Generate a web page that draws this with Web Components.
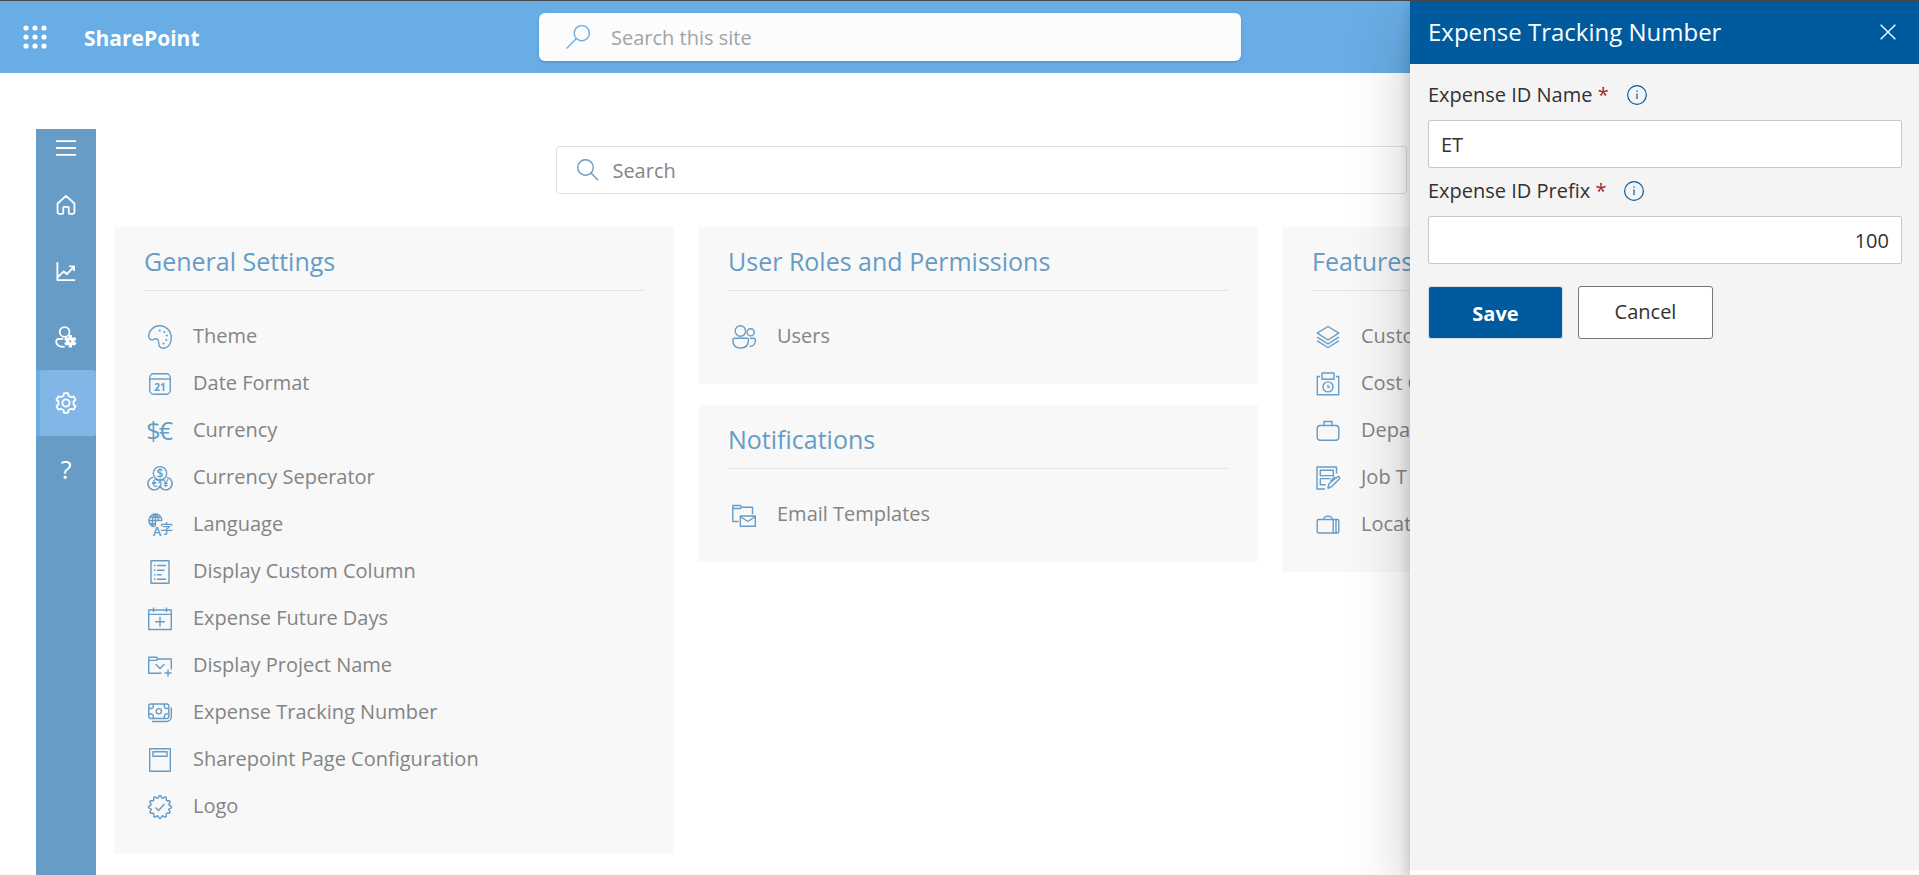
<!DOCTYPE html>
<html lang="en">
<head>
<meta charset="utf-8">
<title>Expense Settings</title>
<style>
  html, body { margin: 0; }
  body {
    font-family: "Open Sans", "Noto Sans", sans-serif;
    font-size: 20px;
    line-height: 28px;
    color: #848484;
    background: #fff;
    --theme: #005a9e;
    --theme-faded: #669cc5;
    --suite-faded: #68ade6;
    --card: #f8f8f8;
  }
</style>
</head>
<body>
<settings-page></settings-page>

<script>
const polar = (r, deg) => {
  const a = (deg - 90) * Math.PI / 180;
  return (12 + r * Math.cos(a)).toFixed(2) + ' ' + (12 + r * Math.sin(a)).toFixed(2);
};
const gearPath = (teeth, outer, inner) => {
  const pts = [];
  for (let k = 0; k < teeth; k++) {
    const c = k * 360 / teeth;
    pts.push(polar(inner, c - 19), polar(outer, c - 11), polar(outer, c + 11), polar(inner, c + 19));
  }
  return 'M' + pts.join('L') + 'Z';
};
const sealPath = () => {
  const pts = [];
  for (let k = 0; k < 12; k++) pts.push(polar(11.4, k * 30 - 3), polar(11.4, k * 30 + 3), polar(9.2, k * 30 + 13), polar(9.2, k * 30 + 17));
  return 'M' + pts.join('L') + 'Z';
};

const ICONS = {
  waffle: '<g fill="currentColor" stroke="none">' + [3, 12, 21].flatMap(y => [3, 12, 21].map(x => `<circle cx="${x}" cy="${y}" r="2.6"/>`)).join('') + '</g>',
  searchLeft: '<circle cx="15.8" cy="8.2" r="7.6"/><path d="M10.4 13.6 0.6 23.4"/>',
  searchRight: '<circle cx="9.5" cy="9.5" r="7.8"/><path d="M15 15l7.2 7.2"/>',
  menu: '<path d="M1 4.500h22M1 12h22M1 19.500h22"/>',
  home: '<path d="M2.8 10.4 12 2l9.2 8.4V20a1.6 1.6 0 0 1-1.6 1.6h-3.4a1.2 1.2 0 0 1-1.2-1.2V15a1 1 0 0 0-1-1h-4a1 1 0 0 0-1 1v5.400a1.200 1.200 0 0 1-1.200 1.200H4.400A1.600 1.600 0 0 1 2.800 20Z"/>',
  chart: '<path d="M2.600 2.500v19.400h19.400M2.800 19 9.500 12.500l3.500 3 8-8.500M15.500 7h5.300v5"/>',
  userGear: '<circle cx="10.500" cy="6.500" r="5.300"/><path d="M9 14H4.500A3.200 3.200 0 0 0 1.300 17.200C1.300 21 5 22.800 10.500 22.800"/><g transform="translate(9.500 9.500) scale(.6)"><path fill="currentColor" stroke-width="2" fill-rule="evenodd" d="' + gearPath(6, 10.500, 7) + 'M15 12a3 3 0 1 0-6 0 3 3 0 0 0 6 0Z"/></g>',
  gear: `<path d="${gearPath(6, 11, 8.400)}"/><circle cx="12" cy="12" r="3.900"/>`,
  palette: '<path d="M11.500.7C5.500.7.7 5.800.7 11c0 3 2.400 4.700 5 3.400 2.300-1.200 4.500-.8 4.800 2 .2 1.600.1 3 .7 4.300.8 1.700 2.300 2.600 4.300 2.600 4.300 0 7.800-4.500 7.800-10C23.300 6 18.300.7 11.500.7Z"/><g fill="currentColor" stroke="none"><circle cx="11.700" cy="5.500" r="1.100"/><circle cx="16.300" cy="7" r="1.100"/><circle cx="18.800" cy="10.500" r="1.100"/><circle cx="18.300" cy="15" r="1.100"/><circle cx="15.500" cy="18.500" r="1.100"/></g>',
  date: '<rect x="1.700" y="1.700" width="20.600" height="20.600" rx="4"/><path d="M1.700 7h20.600"/><text x="12" y="18.500" font-size="10" font-weight="700">21</text>',
  currency: '<text x="5.500" y="20.500" font-size="25" font-weight="400">$</text><text x="18" y="20.500" font-size="25" font-weight="400">€</text>',
  coins: '<path d="M5.200 11.400A6.300 6.300 0 1 0 12 20 6.300 6.300 0 1 0 18.800 11.400"/><path d="M13.300 17.300A6.300 6.300 0 0 1 12 20M8 13.600a6.300 6.300 0 0 1 5.300 3.700M16 13.600a6.300 6.300 0 0 0-5.300 3.700"/><circle cx="12" cy="7.300" r="6.700"/><text x="12" y="11.500" font-size="12" font-weight="600">$</text><text x="6.500" y="21" font-size="10" font-weight="600">€</text><text x="17.500" y="21" font-size="10" font-weight="600">¥</text>',
  language: '<path d="M13.900 7.500A6.500 6.500 0 1 0 5.500 13.700M14 7.500H.8M7.400 1v12.500M1.700 4.200h11.600M1.700 10.800h6M7.400 1C3.500 3 3.500 12 6.500 13.800M7.400 1c2.400 1.500 3 4 3.100 7"/><text x="9" y="22.800" font-size="13" font-weight="600">A</text><text class="cjk" x="18.500" y="20" font-size="13" font-weight="500">字</text>',
  list: '<rect x="3" y=".7" width="18" height="22.600"/><path d="M6 5.500h1.500M9 5.500h9M6 10.200h1.500M9 10.200h7.500M6 14.800h1.500M9 14.800h4.500M6 19.300h1.500M9 19.300h9"/>',
  calendarAdd: '<path d="M.7 3h22.600v19.500H.7ZM.7 7.400h22.600M5.500.5v4.500M18.500.5v4.500M12 9.800v10M7 14.800h10"/>',
  folderAdd: '<path d="M13.500 19.200H.7V3.200h7.800l1.500 1.800h13.300v10.500M.7 6.400h7.500l1.800-1.400M7.500 10l4.500 4.500 4.500-4.500M20 15.500v7M16.500 19h7"/>',
  money: '<rect x=".8" y="3" width="20" height="14.500" rx="2"/><circle cx="10.800" cy="10.200" r="2.600"/><path d="M5.300 3v2.200A2.200 2.200 0 0 1 3.100 7.500H.8M16.300 3v2.200a2.200 2.200 0 0 0 2.200 2.300h2.300M5.300 17.500v-2.200A2.200 2.200 0 0 0 3.100 13H.8M16.300 17.500v-2.200a2.200 2.200 0 0 1 2.200-2.300h2.300M4 20.500h14.500a4.800 4.800 0 0 0 4.800-4.800V6.500"/>',
  page: '<rect x="1.700" y=".7" width="20.600" height="22.600"/><rect x="4.900" y="3.700" width="14.200" height="4.600"/>',
  seal: `<path d="${sealPath()}"/><path d="m7.500 12.500 3 3 6-6.500"/>`,
  people: '<circle cx="8.400" cy="6" r="5.200"/><circle cx="18.700" cy="7.300" r="3.600"/><path d="M2.500 13.300h12.300a1.700 1.700 0 0 1 1.700 1.700c0 5-3 8-7.900 8s-7.800-3-7.800-8a1.700 1.700 0 0 1 1.700-1.700ZM17.800 13.300h4a1.600 1.600 0 0 1 1.600 1.600c0 4-2.500 6.500-6 6.500"/>',
  folderMail: '<path d="M6.500 18.500H.8V2.500h7.500l1.500 1.700H20.500v7M.8 5.500h7.500l1.500-1.300M8.300 13h15v10.300h-15ZM8.300 13.500l7.500 5 7.500-5"/>',
  layers: '<path d="M12 1.500 22.800 8.200 12 15 1.200 8.200ZM1.200 12.200 12 19l10.800-6.800M1.200 15.800 12 22.500l10.800-6.700"/>',
  safe: '<path d="M4 4.500H1.300v18.300h21.400V4.500H20"/><rect x="6" y="1" width="12" height="6.300"/><circle cx="12" cy="14.900" r="5"/><path d="M12 12.800v2.300h2.200"/>',
  briefcase: '<rect x="1.200" y="6.500" width="21.600" height="14.800" rx="3"/><path d="M8 6.500v-4h8v4"/>',
  formEdit: '<path d="M20.500 7.500V1H1v22h8"/><path d="M4.300 4.300h13v5.300h-13ZM4.300 12.600h10M4.300 12.600v6.200h5.500M19 10.500l-4.500 4.500M12 21.300l1.200-3.800 8-6.500a1.300 1.300 0 0 1 2 2L16 20.300l-4 2Z"/>',
  suitcase: '<rect x="1.200" y="6.500" width="21.600" height="13.500" rx="1.500"/><path d="M8 6.500C8 3.500 9.500 3.300 12 3.300s4 .2 4 3.200M17.200 6.500V20M20 6.500V20"/>',
  info: '<circle cx="12" cy="12" r="11.200"/><path d="M12 10.300v6.500"/><circle cx="12" cy="7.300" r=".9" fill="currentColor" stroke="none"/>',
  close: '<path d="M1 1l22 22M23 1 1 23"/>',
  help: '<text x="12" y="23" font-size="28" font-weight="400">?</text>'
};

class UiIcon extends HTMLElement {
  constructor() { super(); this.attachShadow({ mode: 'open' }); }
  connectedCallback() {
    this.shadowRoot.innerHTML = `
      <style>
        :host { display: block; flex: none; width: var(--icon-size, 24px); height: var(--icon-size, 24px); }
        svg { display: block; width: 100%; height: 100%; overflow: visible; fill: none; stroke: currentColor;
              stroke-width: var(--icon-stroke, 1.4); stroke-linejoin: round; }
        text { fill: currentColor; stroke: none; text-anchor: middle; font-family: "Open Sans", sans-serif; }
        .cjk { font-family: "Noto Sans CJK SC", sans-serif; }
      </style>
      <svg viewBox="0 0 24 24" aria-hidden="true">${ICONS[this.getAttribute('name')]}</svg>`;
  }
}
customElements.define('ui-icon', UiIcon);

const define = (tag, html) => {
  const template = document.createElement('template');
  template.innerHTML = html;
  customElements.define(tag, class extends HTMLElement {
    constructor() {
      super();
      this.attachShadow({ mode: 'open' }).append(template.content.cloneNode(true));
    }
  });
};

define('suite-header', `
  <style>
    :host { display: grid; grid-template-columns: 1fr minmax(200px, 702px) 1fr; align-items: center;
            height: 72px; margin-right: 139px; background: var(--suite-faded);
            box-shadow: 139px 0 var(--suite-faded); }
    .brand { display: flex; align-items: center; gap: 37px; padding-left: 23px; color: #fff; }
    button { padding: 0; border: 0; background: none; color: inherit; --icon-size: 24px; }
    a { padding-top: 2px; color: inherit; text-decoration: none; font-size: 21px; font-weight: 700; line-height: 30px; }
    .search { display: flex; align-items: center; gap: 21px; height: 48px; box-sizing: border-box; padding: 0 27px;
              background: #fcfcfc; border-radius: 6px; box-shadow: 0 1px 3px #4a8fc8; color: var(--suite-faded); }
    input { flex: 1; min-width: 0; padding: 2px 0 0; border: 0; outline: 0; background: none; font: inherit; color: #848484; }
    input::placeholder { color: #a3a3a3; opacity: 1; }
  </style>
  <div class="brand">
    <button aria-label="App launcher"><ui-icon name="waffle"></ui-icon></button>
    <a href="#">SharePoint</a>
  </div>
  <label class="search"><ui-icon name="searchLeft"></ui-icon><input type="search" placeholder="Search this site" aria-label="Search this site"></label>`);

define('nav-rail', `
  <style>
    :host { display: block; flex: none; width: 60px; background: var(--theme-faded); color: #fff; }
    nav { display: flex; flex-direction: column; }
  </style>
  <nav><slot></slot></nav>`);

define('nav-item', `
  <style>
    :host { display: block; height: 66px; --icon-size: 22px; --icon-stroke: 2; }
    :host([compact]) { height: 38px; margin-bottom: 5px; }
    a { display: flex; align-items: center; justify-content: center; height: 100%; color: inherit; text-decoration: none; }
    :host([selected]) a { background: #82b6e7; border-radius: 3px; box-shadow: inset 4px 0 var(--suite-faded); }
  </style>
  <a href="#"><slot></slot></a>`);

define('settings-card', `
  <style>
    :host { display: block; background: var(--card); padding: 15px 30px 25px; }
    h2 { margin: 0 0 21px; padding-bottom: 10px; border-bottom: 1px solid #e4e4e4; color: var(--theme-faded);
         font-size: 25px; font-weight: 400; line-height: 38px; }
    ul { margin: 0; padding: 0; list-style: none; }
  </style>
  <h2><slot name="title"></slot></h2>
  <ul role="list"><slot></slot></ul>`);

class SettingsLink extends HTMLElement {
  constructor() { super(); this.attachShadow({ mode: 'open' }); }
  connectedCallback() {
    this.setAttribute('role', 'listitem');
    this.shadowRoot.innerHTML = `
      <style>
        :host { display: block; }
        a { display: flex; align-items: center; gap: 21px; height: 47px; padding-left: 4px; color: inherit;
            text-decoration: none; white-space: nowrap; }
        ui-icon { color: var(--theme-faded); margin-top: 3px; }
      </style>
      <a href="#"><ui-icon name="${this.getAttribute('icon')}"></ui-icon><span><slot></slot></span></a>`;
  }
}
customElements.define('settings-link', SettingsLink);

define('settings-search', `
  <style>
    :host { display: block; width: 49%; margin: 0 auto; }
    label { display: flex; align-items: center; gap: 12px; height: 48px; box-sizing: border-box; padding: 0 19px;
            border: 1px solid #e0e0e0; border-radius: 3px; color: var(--theme-faded); }
    input { flex: 1; min-width: 0; padding: 2px 0 0; border: 0; outline: 0; background: none; font: inherit; }
    input::placeholder { color: #848484; opacity: 1; }
  </style>
  <label><ui-icon name="searchRight"></ui-icon><input type="search" placeholder="Search" aria-label="Search"></label>`);

class FormField extends HTMLElement {
  constructor() { super(); this.attachShadow({ mode: 'open' }); }
  connectedCallback() {
    const get = n => this.getAttribute(n) || '';
    this.shadowRoot.innerHTML = `
      <style>
        :host { display: block; }
        .head { display: flex; align-items: center; height: 46px; padding-bottom: 2px; }
        label { color: #323130; font-weight: 500; }
        i { font-style: normal; color: #a4262c; }
        button { margin-left: 18px; padding: 0; border: 0; background: none; color: var(--theme); --icon-size: 20px; }
        input { display: block; width: 100%; height: 48px; box-sizing: border-box; padding: 0 12px; border: 1px solid #c8c8c8;
                border-radius: 2px; background: #fff; color: #323130; font: inherit; }
        :host([numeric]) input { text-align: right; }
      </style>
      <div class="head">
        <label for="field">${get('label')} <i>*</i></label>
        <button type="button" aria-label="About ${get('label')}"><ui-icon name="info"></ui-icon></button>
      </div>
      <input id="field" type="text" required value="${get('value')}">`;
  }
}
customElements.define('form-field', FormField);

define('action-button', `
  <style>
    :host { display: block; }
    button { display: block; width: 135px; height: 53px; padding: 0 0 2px; border: 1px solid #767676; border-radius: 3px;
             background: #fff; color: #323130; font: inherit; font-weight: 500; }
    :host([primary]) button { padding: 2px 0 0; border-color: #d5dde4; background: var(--theme); color: #fff; font-weight: 700; }
  </style>
  <button type="button"><slot></slot></button>`);

define('side-panel', `
  <style>
    :host { position: fixed; top: 1px; right: 0; bottom: 0; width: 509px; max-width: 100%; display: flex; flex-direction: column;
            background: #fff; box-shadow: 0 26px 58px rgba(0,0,0,.22), 0 5px 14px rgba(0,0,0,.18); }
    header { display: flex; align-items: center; justify-content: space-between; height: 63px; box-sizing: border-box;
             padding: 0 23px 2px 18px; background: var(--theme); color: #fff; }
    h1 { margin: 0; font-size: 24px; font-weight: 400; line-height: 32px; }
    header button { padding: 0; border: 0; background: none; color: inherit; --icon-size: 16px; --icon-stroke: 2; }
    form { flex: 1; margin-bottom: 5px; padding: 8px 17px 0 18px; background: #f4f4f4; }
    .actions { display: flex; gap: 15px; margin-top: 22px; }
  </style>
  <header>
    <h1><slot name="title"></slot></h1>
    <button aria-label="Close"><ui-icon name="close"></ui-icon></button>
  </header>
  <form><slot></slot><div class="actions"><slot name="actions"></slot></div></form>`);

define('settings-page', `
  <style>
    :host { display: flex; flex-direction: column; min-height: 100vh; box-sizing: border-box; border-top: 1px solid #4a4a4a;
            overflow-x: hidden; }
    .shell { flex: 1; display: flex; padding: 56px 70px 0 36px; }
    main { flex: 1; min-width: 0; padding: 17px 0 16px 18px; }
    .cards { display: grid; grid-template-columns: repeat(3, minmax(0, 1fr)); gap: 24px; align-items: start;
             margin: 33px 7px 0 0; }
    .stack { display: grid; gap: 21px; }
  </style>
  <suite-header></suite-header>
  <div class="shell">
    <nav-rail>
      <nav-item compact><ui-icon name="menu"></ui-icon></nav-item>
      <nav-item><ui-icon name="home"></ui-icon></nav-item>
      <nav-item><ui-icon name="chart"></ui-icon></nav-item>
      <nav-item><ui-icon name="userGear"></ui-icon></nav-item>
      <nav-item selected><ui-icon name="gear"></ui-icon></nav-item>
      <nav-item><ui-icon name="help"></ui-icon></nav-item>
    </nav-rail>
    <main>
      <settings-search></settings-search>
      <div class="cards">
        <settings-card>
          <span slot="title">General Settings</span>
          <settings-link icon="palette">Theme</settings-link>
          <settings-link icon="date">Date Format</settings-link>
          <settings-link icon="currency">Currency</settings-link>
          <settings-link icon="coins">Currency Seperator</settings-link>
          <settings-link icon="language">Language</settings-link>
          <settings-link icon="list">Display Custom Column</settings-link>
          <settings-link icon="calendarAdd">Expense Future Days</settings-link>
          <settings-link icon="folderAdd">Display Project Name</settings-link>
          <settings-link icon="money">Expense Tracking Number</settings-link>
          <settings-link icon="page">Sharepoint Page Configuration</settings-link>
          <settings-link icon="seal">Logo</settings-link>
        </settings-card>
        <div class="stack">
          <settings-card>
            <span slot="title">User Roles and Permissions</span>
            <settings-link icon="people">Users</settings-link>
          </settings-card>
          <settings-card>
            <span slot="title">Notifications</span>
            <settings-link icon="folderMail">Email Templates</settings-link>
          </settings-card>
        </div>
        <settings-card>
          <span slot="title">Features</span>
          <settings-link icon="layers">Custom</settings-link>
          <settings-link icon="safe">Cost C</settings-link>
          <settings-link icon="briefcase">Depart</settings-link>
          <settings-link icon="formEdit">Job T</settings-link>
          <settings-link icon="suitcase">Locat</settings-link>
        </settings-card>
      </div>
    </main>
  </div>
  <side-panel>
    <span slot="title">Expense Tracking Number</span>
    <form-field label="Expense ID Name" value="ET"></form-field>
    <form-field label="Expense ID Prefix" value="100" numeric></form-field>
    <action-button slot="actions" primary>Save</action-button>
    <action-button slot="actions">Cancel</action-button>
  </side-panel>`);
</script>
</body>
</html>
